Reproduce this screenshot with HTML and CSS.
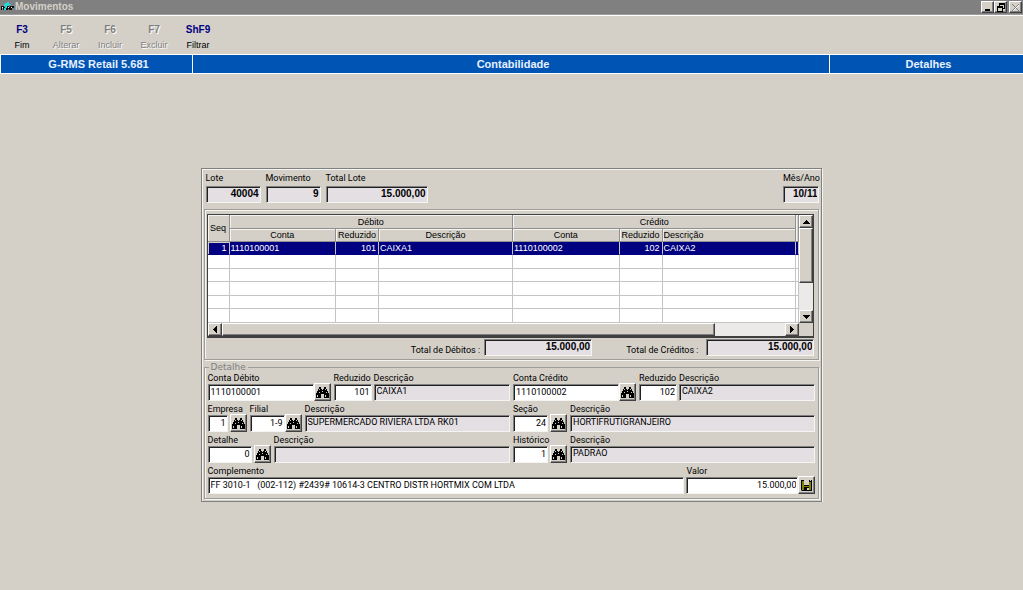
FILE: index.html
```html
<!DOCTYPE html>
<html lang="pt-BR">
<head>
<meta charset="utf-8">
<title>Movimentos</title>
<link rel="stylesheet" href="styles.css">
</head>
<body>
<svg width="0" height="0" class="defs" aria-hidden="true">
  <symbol id="binoculars" viewBox="0 0 13 13">
    <path fill="#000" d="M3 1h2v2h1v1h1V3h1V1h2v2h1v2h1v2h1v5H8V8H5v4H0V7h1V5h1V3h1z"/>
    <path fill="#c8c8c8" d="M3 3h1v1H3zM9 3h1v1H9zM1 9h1v2H1zM9 9h1v2H9zM6 5h1v1H6zM3 6h1v1H3zM10 6h1v1h-1z"/>
  </symbol>
</svg>
<header class="titlebar">
  <svg class="logo" width="14" height="12" viewBox="0 0 14 12" aria-hidden="true">
    <path fill="#111" d="M1 5h3v1h2V5h3v1h1V5h4v2h-2v2H9V8H8v1H6V8H4v1H3V7H2v2H1z"/>
    <path fill="#20d8d8" d="M5 2h2V1h2v2h2v1H9v1H7v2H6v2H4V7h1V5H4V3h1z"/>
    <path fill="#eee" d="M2 6h1v1H2zM8 6h1v1H8zM11 6h1v1h-1z"/>
  </svg>
  <h1>Movimentos</h1>
  <div class="window-buttons">
    <button type="button" aria-label="Minimizar"><svg width="10" height="9" viewBox="0 0 10 9"><path d="M2 6h5v2H2z"/></svg></button>
    <button type="button" aria-label="Restaurar"><svg width="10" height="9" viewBox="0 0 10 9"><path d="M3 0h6v6H7V5h1V2H4v1H3zM1 3h6v6H1zM2 5v3h4V5z" fill-rule="evenodd"/></svg></button>
    <button type="button" class="close" aria-label="Fechar" disabled><svg width="10" height="9" viewBox="0 0 10 9"><path d="M2 2l6 6M8 2l-6 6" stroke="#fff"/><path d="M1 1l7 7M8 1l-7 7" stroke="#808080"/></svg></button>
  </div>
</header>
<nav class="toolbar">
  <button type="button"><b>F3</b><span>Fim</span></button>
  <button type="button" disabled><b>F5</b><span>Alterar</span></button>
  <button type="button" disabled><b>F6</b><span>Incluir</span></button>
  <button type="button" disabled><b>F7</b><span>Excluir</span></button>
  <button type="button"><b>ShF9</b><span>Filtrar</span></button>
</nav>
<div class="banner"><div>G-RMS Retail 5.681</div><div>Contabilidade</div><div>Detalhes</div></div>
<main>
  <form class="panel">
    <div class="row summary">
      <label class="field w54"><span>Lote</span><input class="total" value="40004" readonly></label>
      <label class="field w54"><span>Movimento</span><input class="total" value="9" readonly></label>
      <label class="field w102"><span>Total Lote</span><input class="total" value="15.000,00" readonly></label>
      <label class="field month"><span>Mês/Ano</span><input class="total" value="10/11" readonly></label>
    </div>
    <section class="group">
      <div class="grid">
        <table>
          <colgroup><col class="seq"><col class="conta"><col class="red"><col><col class="conta"><col class="red"><col><col class="tail"></colgroup>
          <thead>
            <tr><th rowspan="2">Seq</th><th colspan="3">Débito</th><th colspan="3">Crédito</th><th rowspan="2"></th></tr>
            <tr><th>Conta</th><th>Reduzido</th><th>Descrição</th><th>Conta</th><th>Reduzido</th><th class="left">Descrição</th></tr>
          </thead>
          <tbody>
            <tr class="selected"><td class="num current">1</td><td>1110100001</td><td class="num">101</td><td>CAIXA1</td><td>1110100002</td><td class="num">102</td><td>CAIXA2</td><td></td></tr>
            <tr><td></td><td></td><td></td><td></td><td></td><td></td><td></td><td></td></tr>
            <tr><td></td><td></td><td></td><td></td><td></td><td></td><td></td><td></td></tr>
            <tr><td></td><td></td><td></td><td></td><td></td><td></td><td></td><td></td></tr>
            <tr><td></td><td></td><td></td><td></td><td></td><td></td><td></td><td></td></tr>
            <tr><td></td><td></td><td></td><td></td><td></td><td></td><td></td><td></td></tr>
          </tbody>
        </table>
        <div class="scroll vertical">
          <button type="button" aria-label="Acima"><svg width="7" height="4" viewBox="0 0 7 4"><path d="M3 0h1v1h1v1h1v1h1v1H0V3h1V2h1V1h1z"/></svg></button>
          <div class="thumb"></div><div class="track"></div>
          <button type="button" aria-label="Abaixo"><svg width="7" height="4" viewBox="0 0 7 4"><path d="M0 0h7v1H6v1H5v1H4v1H3V3H2V2H1V1H0z"/></svg></button>
        </div>
        <div class="scroll horizontal">
          <button type="button" aria-label="Esquerda"><svg width="4" height="7" viewBox="0 0 4 7"><path d="M4 0v7H3V6H2V5H1V4H0V3h1V2h1V1h1V0z"/></svg></button>
          <div class="thumb"></div><div class="track"></div>
          <button type="button" aria-label="Direita"><svg width="4" height="7" viewBox="0 0 4 7"><path d="M0 0v7h1V6h1V5h1V4h1V3H3V2H2V1H1V0z"/></svg></button>
        </div>
      </div>
      <div class="totals">
        <label><span>Total de Débitos :</span><input class="total" value="15.000,00" readonly></label>
        <label><span>Total de Créditos :</span><input class="total" value="15.000,00" readonly></label>
      </div>
    </section>
    <fieldset class="detail">
      <legend>Detalhe</legend>
      <div class="columns">
        <div class="row">
          <label class="field w106"><span>Conta Débito</span><input value="1110100001"></label>
          <button type="button" class="tool joined" aria-label="Buscar conta débito"><svg width="13" height="13"><use href="#binoculars"/></svg></button>
          <label class="field w38 num"><span>Reduzido</span><input value="101"></label>
          <label class="field grow"><span>Descrição</span><input value="CAIXA1" readonly></label>
        </div>
        <div class="row">
          <label class="field w106"><span>Conta Crédito</span><input value="1110100002"></label>
          <button type="button" class="tool joined" aria-label="Buscar conta crédito"><svg width="13" height="13"><use href="#binoculars"/></svg></button>
          <label class="field w38 num"><span>Reduzido</span><input value="102"></label>
          <label class="field grow"><span>Descrição</span><input value="CAIXA2" readonly></label>
        </div>
        <div class="row">
          <label class="field w20 num"><span>Empresa</span><input value="1"></label>
          <button type="button" class="tool" aria-label="Buscar empresa"><svg width="13" height="13"><use href="#binoculars"/></svg></button>
          <label class="field w34 num"><span>Filial</span><input value="1-9"></label>
          <button type="button" class="tool joined" aria-label="Buscar filial"><svg width="13" height="13"><use href="#binoculars"/></svg></button>
          <label class="field grow"><span>Descrição</span><input value="SUPERMERCADO RIVIERA LTDA RK01" readonly></label>
        </div>
        <div class="row">
          <label class="field w34 num"><span>Seção</span><input value="24"></label>
          <button type="button" class="tool" aria-label="Buscar seção"><svg width="13" height="13"><use href="#binoculars"/></svg></button>
          <label class="field grow"><span>Descrição</span><input value="HORTIFRUTIGRANJEIRO" readonly></label>
        </div>
        <div class="row">
          <label class="field w44 num"><span>Detalhe</span><input value="0"></label>
          <button type="button" class="tool" aria-label="Buscar detalhe"><svg width="13" height="13"><use href="#binoculars"/></svg></button>
          <label class="field grow"><span>Descrição</span><input value="" readonly></label>
        </div>
        <div class="row">
          <label class="field w34 num"><span>Histórico</span><input value="1"></label>
          <button type="button" class="tool" aria-label="Buscar histórico"><svg width="13" height="13"><use href="#binoculars"/></svg></button>
          <label class="field grow"><span>Descrição</span><input value="PADRAO" readonly></label>
        </div>
        <div class="row wide">
          <label class="field grow"><span>Complemento</span><input value="FF 3010-1   (002-112) #2439# 10614-3 CENTRO DISTR HORTMIX COM LTDA"></label>
          <label class="field w112 num"><span>Valor</span><input value="15.000,00"></label>
          <button type="button" class="tool joined" aria-label="Salvar"><svg width="13" height="13" viewBox="0 0 13 13"><path fill="#000" d="M1 1h11v11H2l-1-1z"/><path fill="#808000" d="M2 2h2v9H2zM9 3h2v8H9zM3 7h7v1H3z"/><path fill="#d4d0c8" d="M4 1h5v5H4zM7 9h2v2H7zM10 1h1v1h-1z"/></svg></button>
        </div>
      </div>
    </fieldset>
  </form>
</main>
</body>
</html>
```
FILE: styles.css
```css
* { box-sizing: border-box; }
body {
  margin: 0;
  background: #d4d0c8;
  color: #000;
  font: 9px/12px Roboto, "Liberation Sans", Arial, sans-serif;
}
button, input { font: inherit; color: inherit; margin: 0; padding: 0; border-radius: 0; }
.defs { position: absolute; }

.titlebar {
  display: flex;
  align-items: center;
  height: 15px;
  background: #808080;
  border-bottom: 1px solid #a09c98;
}
.titlebar h1 {
  flex: 1;
  margin: 0 0 0 1px;
  color: #d4d0c8;
  font: bold 10px/14px "Liberation Sans", sans-serif;
}
.window-buttons { display: flex; padding-right: 1px; }
.window-buttons button { width: 13px; height: 12px; }
.window-buttons .close { margin-left: 2px; }

.window-buttons button, .scroll button, .thumb, .tool {
  display: flex;
  align-items: center;
  justify-content: center;
  background: #d4d0c8;
  border: 1px solid;
  border-color: #fff #404040 #404040 #fff;
  box-shadow: inset -1px -1px #808080;
}

.toolbar {
  display: flex;
  height: 39px;
  padding-top: 7px;
  border-top: 1px solid #fff;
}
.toolbar button {
  width: 44px;
  border: 0;
  background: none;
  display: flex;
  flex-direction: column;
  align-items: center;
  justify-content: flex-start;
  padding-top: 1px;
  gap: 3px;
}
.toolbar b { color: #000080; font: bold 10px/12px "Liberation Sans", sans-serif; }
.toolbar span { font: 9px/12px "Liberation Sans", sans-serif; }
.toolbar button:disabled, .toolbar button:disabled b { color: #808080; text-shadow: 1px 1px #fff; }

.banner {
  display: grid;
  grid-template-columns: 191fr 636fr 193fr;
  gap: 1px;
  padding: 1px 0 1px 1px;
  background: #fff;
}
.banner div {
  padding-left: 4px;
  background: #0055b4;
  color: #e8f0ff;
  text-align: center;
  font: bold 11px/18px "Liberation Sans", sans-serif;
}

main { display: flex; justify-content: center; padding-top: 94px; }
.panel {
  width: 60.8%;
  min-width: 560px;
  padding: 3px 2px 2px;
  border: 1px solid #808080;
  box-shadow: inset 1px 1px #f4f4f0, 1px 1px #f4f4f0;
}

.row { display: flex; align-items: flex-end; gap: 2px; min-width: 0; }
.field { display: flex; flex-direction: column; white-space: nowrap; }
.field + .tool { flex: none; }
.grow { flex: 1; min-width: 0; }
.w20 { width: 20px; }
.w34 { width: 35px; }
.w38 { width: 38px; }
.w44 { width: 44px; }
.w54 { width: 55px; }
.w102 { width: 102px; }
.w106 { width: 106px; }
.w112 { width: 112px; }

input {
  display: block;
  width: 100%;
  min-width: 0;
  height: 17px;
  padding: 0 1px 1px 2px;
  background: #fff;
  border: 1px solid;
  border-color: #808080 #f4f4f0 #f4f4f0 #808080;
  box-shadow: inset 1px 1px #202020;
  white-space: pre;
}
input:read-only { background: #e3dfe3; padding-bottom: 3px; }
.num input { text-align: right; }
.total { text-align: right; font: bold 10px/12px "Liberation Sans", sans-serif; }

.summary { gap: 5px; padding: 0 0 6px 2px; }
.summary .field { gap: 2px; }
.month { width: 36px; margin-left: auto; align-items: center; }

.group {
  padding: 4px 4px 3px 2px;
  border: 1px solid #a09c98;
  box-shadow: inset 1px 1px #f4f4f0, 1px 1px #f4f4f0;
}
.grid {
  display: grid;
  grid-template-columns: 1fr 14px;
  border: 1px solid #404040;
  border-width: 1px 1px 2px 1px;
  font: 9px/12px "Liberation Sans", sans-serif;
}
table { width: 100%; table-layout: fixed; border-spacing: 0; background: #fff; }
.seq { width: 22px; }
.conta { width: 18%; }
.red { width: 43px; }
.tail { width: 3px; }
th, td {
  height: 13px;
  padding: 0 1px;
  overflow: hidden;
  white-space: nowrap;
  line-height: 12px;
  border: solid #c4c4c4;
  border-width: 0 1px 1px 0;
}
thead tr:first-child th, tbody tr:nth-child(even) td { height: 14px; }
th { font-weight: normal; background: #d4d0c8; border-color: #909090; box-shadow: inset 1px 1px #f4f4f0; }
.left { text-align: left; }
table .num { text-align: right; padding-right: 2px; }
.selected td { background: #000080; color: #fff; border-bottom-color: #000080; }
.selected .current { box-shadow: inset 1px 1px #d4d0c8; }

.scroll { display: flex; background: #eceae8; }
.vertical { flex-direction: column; }
.scroll button { flex: none; width: 14px; height: 13px; }
.horizontal .thumb { flex: 7; }
.horizontal .track { flex: 1; }
.vertical .thumb { flex: 2; }
.vertical .track { flex: 1; }
.horizontal { grid-column: 1; }

.totals { display: flex; justify-content: flex-end; gap: 34px; padding-top: 1px; }
.totals label { display: flex; align-items: flex-end; gap: 4px; }
.totals label + label { gap: 8px; }
.totals input { width: 108px; }

.detail {
  margin: 3px 0 0;
  padding: 0 3px 4px;
  min-width: 0;
  border: 1px solid #a09c98;
  box-shadow: inset 1px 0 #f4f4f0, 1px 1px #f4f4f0;
}
legend { margin-left: 1px; padding: 0 2px; color: #808080; font: 9px/9px "DejaVu Sans", sans-serif; }
.columns { display: grid; grid-template-columns: 1fr 1fr; column-gap: 3px; row-gap: 2px; }
.wide { grid-column: 1 / -1; }
.tool { width: 17px; height: 18px; }
.tool + .field { margin-left: 1px; }
.joined { margin-left: -2px; }
```
